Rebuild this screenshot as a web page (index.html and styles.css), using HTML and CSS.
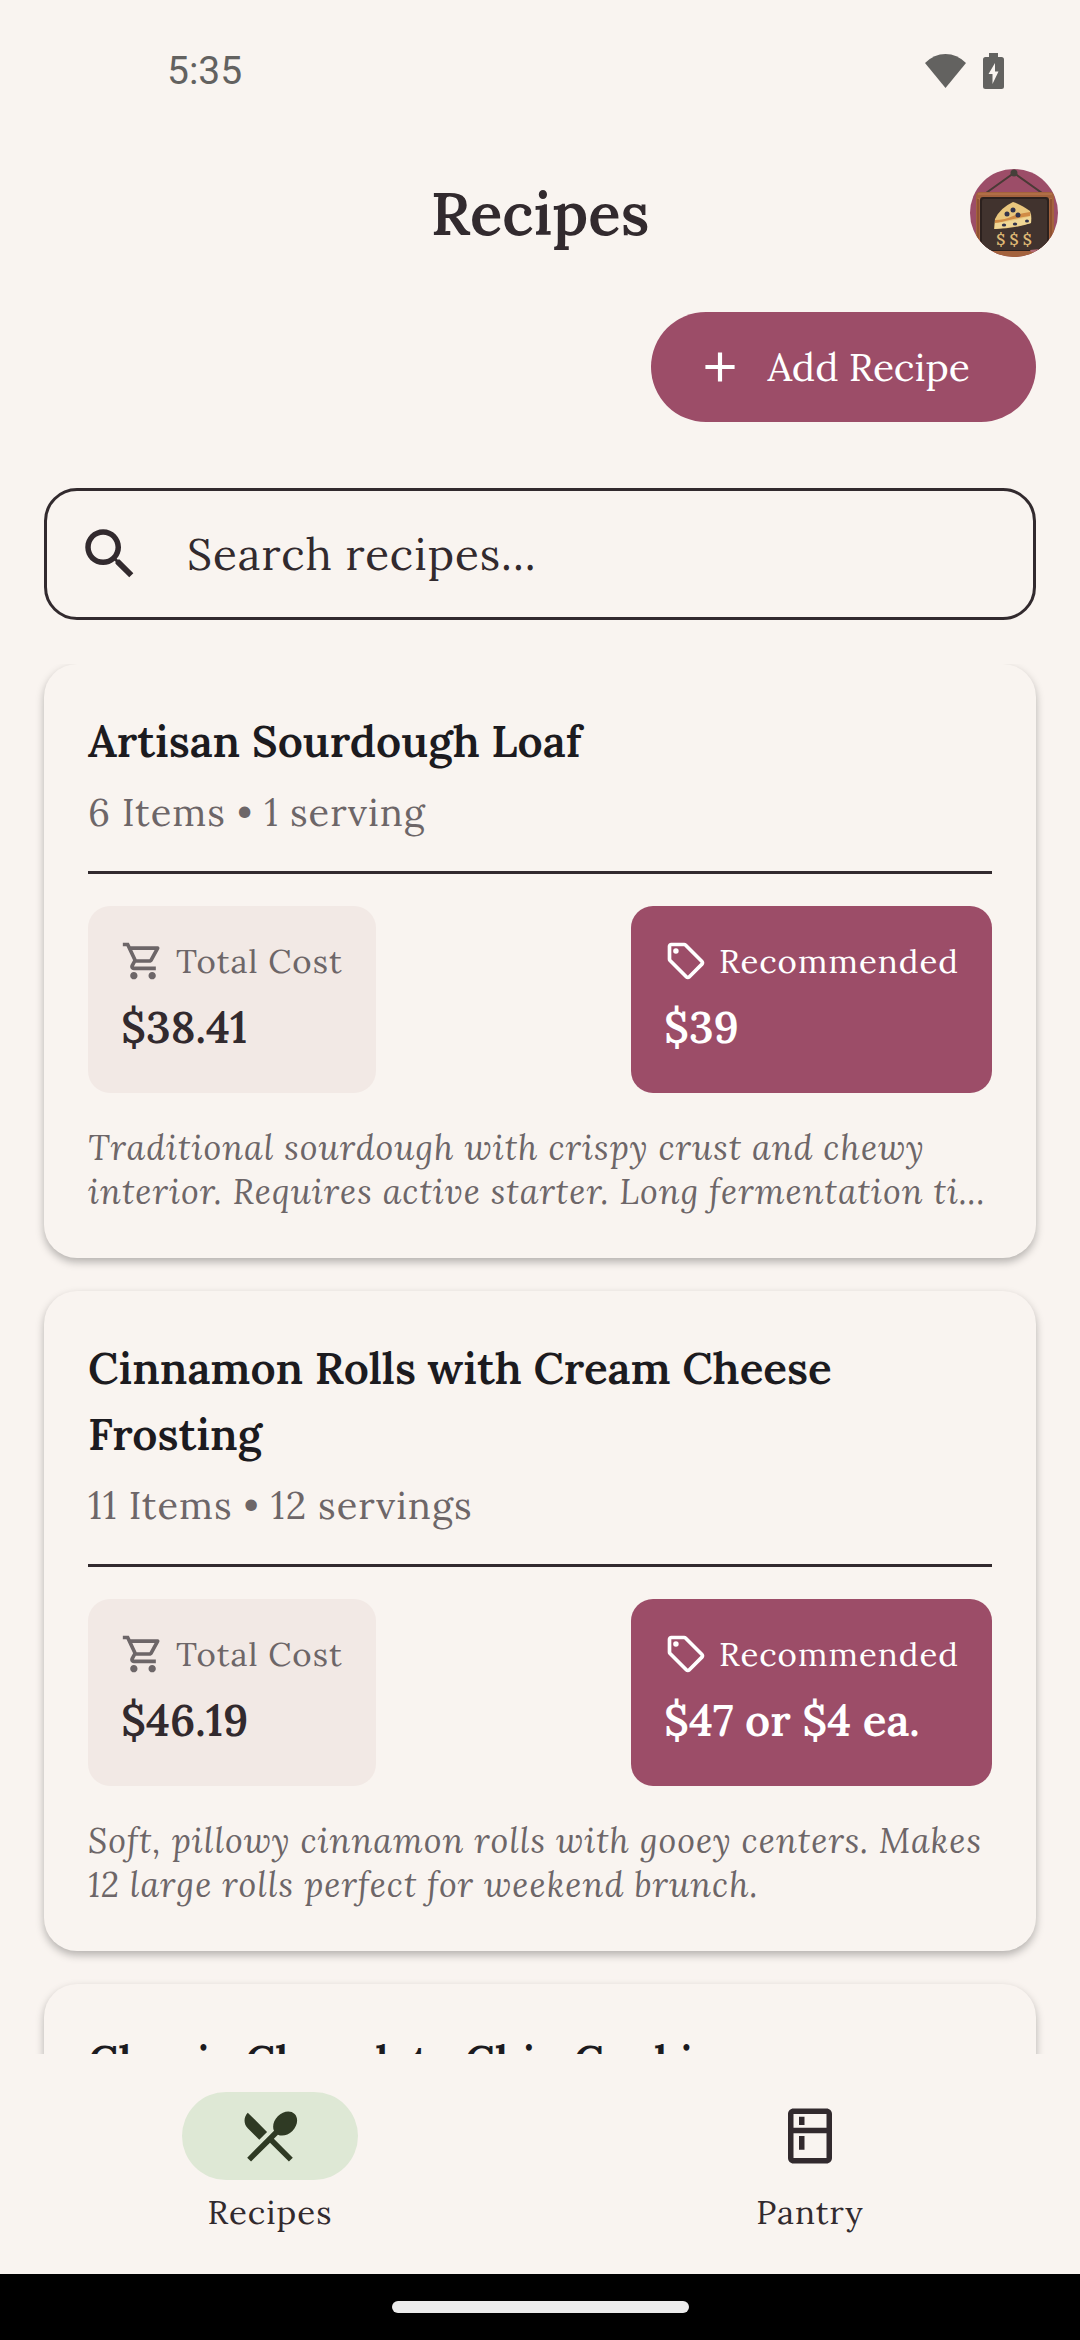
FILE: index.html
```html
<!DOCTYPE html>
<html lang="en">
<head>
<meta charset="utf-8">
<meta name="viewport" content="width=device-width, initial-scale=1">
<title>Recipes</title>
<link rel="stylesheet" href="styles.css">
</head>
<body>
<svg class="sprite" aria-hidden="true">
  <symbol id="cart" viewBox="0 0 24 24"><path d="M15.55 13c.75 0 1.41-.41 1.75-1.03l3.58-6.49c.37-.66-.11-1.48-.87-1.48H5.21l-.94-2H1v2h2l3.6 7.59-1.35 2.44C4.52 15.37 5.48 17 7 17h12v-2H7l1.1-2h7.45zM6.16 6h12.15l-2.76 5H8.53L6.16 6zM7 18c-1.1 0-1.99.9-1.99 2S5.9 22 7 22s2-.9 2-2-.9-2-2-2zm10 0c-1.1 0-1.99.9-1.99 2s.89 2 1.99 2 2-.9 2-2-.9-2-2-2z"/></symbol>
  <symbol id="tag" viewBox="0 0 24 24"><path d="M21.41 11.58l-9-9C12.05 2.22 11.55 2 11 2H4c-1.1 0-2 .9-2 2v7c0 .55.22 1.05.59 1.42l9 9c.36.36.86.58 1.41.58s1.05-.22 1.41-.59l7-7c.37-.36.59-.86.59-1.41s-.23-1.06-.59-1.42zM13 20.01L4 11V4h7v-.01l9 9-7 7.02z"/><circle cx="6.5" cy="6.5" r="1.5"/></symbol>
</svg>
<div class="app">
  <div class="status">
    <span class="clock">5:35</span>
    <div class="status-icons">
      <svg class="wifi" viewBox="0 0 41 36"><path d="M20.500 35L0 10Q9 1 20.500 1T41 10Z"/></svg>
      <svg class="battery" viewBox="0 0 21 36"><path fill-rule="evenodd" d="M6 0h9v4h3.500Q21 4 21 6.500v27Q21 36 18.500 36h-16Q0 36 0 33.500v-27Q0 4 2.500 4H6zM12 10L5.500 21H9.500v10L15.500 18.500H12z"/></svg>
    </div>
  </div>

  <header class="header">
    <h1 class="page-title">Recipes</h1>
    <button class="avatar" type="button" aria-label="Account">
      <svg viewBox="0 0 88 88">
        <rect width="88" height="88" fill="#9c4d68"/>
        <path d="M16 24L44 4 72 24" fill="none" stroke="#4a3a36" stroke-width="2"/>
        <circle cx="44" cy="4" r="3.500" fill="#45403a"/>
        <rect x="6" y="23" width="78" height="68" rx="4" fill="#a3623d"/>
        <path d="M8 25H82M8 30H82" stroke="#bd7b50" stroke-width="1"/>
        <path d="M8 30V88M81 30V88" stroke="#8a4c2e" stroke-width="1.500"/>
        <rect x="10" y="28" width="69" height="54" rx="3" fill="#2c211e"/>
        <rect x="12" y="30" width="65" height="51" rx="2" fill="#41332e"/>
        <path d="M24 60L25 50Q30 39 43 33 50 35 60 42Q62 47 61 54Q44 60 24 60Z" fill="#e9c67d"/>
        <path d="M25 51Q35 51 43 47 51 44 60 43V47Q45 49 25 55Z" fill="#d08b45"/>
        <path d="M25 54Q45 52 61 47V54Q45 58 25 60Z" fill="#f0d796"/>
        <g fill="#32334c"><circle cx="43" cy="41" r="2.500"/><circle cx="37" cy="45" r="2.500"/><circle cx="48" cy="46" r="2.500"/><ellipse cx="34" cy="56" rx="2.200" ry="1.600"/><ellipse cx="45" cy="55" rx="2.200" ry="1.600"/><ellipse cx="57" cy="52" rx="2" ry="1.600"/></g>
        <path d="M60 81L70 80 68 83H61Z" fill="#b36a76"/>
        <text x="44" y="76" text-anchor="middle" class="avatar-text">$ $ $</text>
      </svg>
    </button>
  </header>

  <div class="actions">
    <button class="add" type="button">
      <svg class="add-icon" viewBox="0 0 24 24"><path d="M19 13h-6v6h-2v-6H5v-2h6V5h2v6h6v2z"/></svg>
      Add Recipe
    </button>
  </div>

  <label class="search">
    <svg class="icon-large" viewBox="0 0 24 24"><path d="M15.500 14h-.79l-.28-.27C15.410 12.590 16 11.110 16 9.500 16 5.910 13.090 3 9.500 3S3 5.910 3 9.500 5.910 16 9.500 16c1.610 0 3.090-.59 4.230-1.570l.27.28v.79l5 4.990L20.490 19l-4.990-5zm-6 0C7.010 14 5 11.990 5 9.500S7.010 5 9.500 5 14 7.010 14 9.500 11.990 14 9.500 14z"/></svg>
    <input class="search-input" type="text" placeholder="Search recipes..." aria-label="Search recipes">
  </label>

  <main class="list">
    <article class="card">
      <h2 class="card-title">Artisan Sourdough Loaf</h2>
      <p class="meta">6 Items • 1 serving</p>
      <hr class="rule">
      <div class="prices">
        <div class="price">
          <span class="price-label"><svg class="icon-small"><use href="#cart"/></svg>Total Cost</span>
          <strong class="amount">$38.41</strong>
        </div>
        <div class="price price-accent">
          <span class="price-label"><svg class="icon-small"><use href="#tag"/></svg>Recommended</span>
          <strong class="amount">$39</strong>
        </div>
      </div>
      <p class="desc">Traditional sourdough with crispy crust and chewy interior. Requires active starter. Long fermentation ti...</p>
    </article>

    <article class="card">
      <h2 class="card-title">Cinnamon Rolls with Cream Cheese Frosting</h2>
      <p class="meta">11 Items • 12 servings</p>
      <hr class="rule">
      <div class="prices">
        <div class="price">
          <span class="price-label"><svg class="icon-small"><use href="#cart"/></svg>Total Cost</span>
          <strong class="amount">$46.19</strong>
        </div>
        <div class="price price-accent">
          <span class="price-label"><svg class="icon-small"><use href="#tag"/></svg>Recommended</span>
          <strong class="amount">$47 or $4 ea.</strong>
        </div>
      </div>
      <p class="desc">Soft, pillowy cinnamon rolls with gooey centers. Makes 12 large rolls perfect for weekend brunch.</p>
    </article>

    <article class="card">
      <h2 class="card-title">Classic Chocolate Chip Cookies</h2>
    </article>
  </main>

  <nav class="nav">
    <a class="nav-item" href="#recipes" aria-current="page">
      <span class="pill pill-active"><svg class="icon-large" viewBox="0 0 24 24"><path d="M8.100 13.340l2.830-2.830L3.910 3.500c-1.560 1.560-1.560 4.090 0 5.660l4.190 4.180zm6.780-1.810c1.530.71 3.680.21 5.270-1.380 1.910-1.910 2.280-4.650.81-6.120-1.460-1.460-4.200-1.100-6.120.81-1.590 1.590-2.090 3.740-1.380 5.270L3.700 19.870l1.410 1.410L12 14.410l6.880 6.880 1.410-1.410L13.410 13l1.470-1.470z"/></svg></span>
      Recipes
    </a>
    <a class="nav-item" href="#pantry">
      <span class="pill"><svg class="icon-large" viewBox="0 0 24 24"><path d="M18 2.010L6 2c-1.100 0-2 .89-2 2v16c0 1.100.9 2 2 2h12c1.100 0 2-.9 2-2V4c0-1.100-.9-1.990-2-1.990zM18 20H6v-9.020h12V20zm0-11H6V4h12v5zM8 5h2v3H8zM8 12h2v5H8z"/></svg></span>
      Pantry
    </a>
  </nav>
  <div class="system-bar"><span class="handle"></span></div>
</div>
</body>
</html>
```
FILE: styles.css
```css
:root {
  --surface: #f9f4f0;
  --ink: #322a2e;
  --ink-strong: #1c1b1f;
  --muted: #6d6668;
  --accent: #9c4d68;
}

* { box-sizing: border-box; }

body {
  margin: 0;
  background: var(--surface);
  color: var(--ink);
  font-family: "Lora", "Liberation Serif", serif;
  font-size: 33px;
  line-height: 44px;
}

svg { display: block; flex: none; fill: currentColor; }
h1, h2, p { margin: 0; }
button, input { font: inherit; color: inherit; }

.sprite { position: absolute; width: 0; height: 0; }

.app { display: flex; flex-direction: column; height: 100vh; }

.status {
  display: flex;
  flex: none;
  align-items: center;
  justify-content: space-between;
  height: 141px;
  padding: 0 76px 0 167px;
  color: #636260;
}
.clock { font-family: Roboto, sans-serif; font-size: 39px; font-weight: 400; }
.status-icons { display: flex; align-items: center; gap: 17px; }
.wifi { width: 41px; height: 36px; }
.battery { width: 21px; height: 36px; }

.header {
  display: grid;
  flex: none;
  grid-template-columns: 1fr auto 1fr;
  align-items: center;
  padding: 28px 22px 0;
}
.page-title { grid-column: 2; font-size: 60px; font-weight: 600; line-height: 88px; }
.avatar {
  justify-self: end;
  width: 88px;
  height: 88px;
  padding: 0;
  overflow: hidden;
  border: 0;
  border-radius: 50%;
}
.avatar-text { fill: #dfb975; font-size: 16px; font-weight: 600; }

.actions { display: flex; flex: none; justify-content: flex-end; padding: 55px 44px 0; }
.add {
  display: flex;
  align-items: center;
  gap: 22px;
  height: 110px;
  padding: 0 66px 0 44px;
  border: 0;
  border-radius: 55px;
  background: var(--accent);
  color: #fff;
  font-size: 39px;
}
.add-icon { width: 50px; height: 50px; }

.search {
  display: flex;
  flex: none;
  align-items: center;
  gap: 44px;
  height: 132px;
  margin: 66px 44px 44px;
  padding: 0 30px;
  border: 3px solid var(--ink);
  border-radius: 33px;
}
.search-input {
  flex: 1;
  min-width: 0;
  padding: 0;
  border: 0;
  outline: 0;
  background: none;
  font-size: 44px;
  letter-spacing: 1px;
  line-height: 66px;
}
.search-input::placeholder { color: var(--ink); opacity: 1; }

.icon-large { width: 66px; height: 66px; }
.icon-small { width: 44px; height: 44px; }

.list {
  display: flex;
  flex: 1;
  flex-direction: column;
  gap: 33px;
  min-height: 0;
  padding: 0 44px;
  overflow-y: auto;
  scrollbar-width: none;
}
.card {
  flex: none;
  padding: 44px;
  border-radius: 33px;
  background: var(--surface);
  box-shadow: 0 4px 9px rgba(0, 0, 0, .28);
}
.card-title { color: var(--ink-strong); font-size: 44px; font-weight: 600; line-height: 66px; }
.meta { margin-top: 11px; color: var(--muted); font-size: 38px; letter-spacing: 1px; line-height: 55px; }
.rule { height: 3px; margin: 31px 0 32px; border: 0; background: var(--ink); }

.prices { display: flex; justify-content: space-between; }
.price {
  display: flex;
  flex-direction: column;
  gap: 11px;
  padding: 33px;
  border-radius: 22px;
  background: #f2e9e5;
}
.price-label { display: flex; align-items: center; gap: 11px; color: var(--muted); letter-spacing: 1px; }
.amount { font-size: 44px; font-weight: 600; line-height: 66px; }
.price-accent { background: var(--accent); color: #fff; }
.price-accent .price-label { color: #fff; }

.desc { margin-top: 33px; color: var(--muted); font-size: 34px; font-style: italic; letter-spacing: 1px; }

.nav { display: flex; flex: none; padding: 38px 0 40px; }
.nav-item {
  display: flex;
  flex: 1;
  flex-direction: column;
  align-items: center;
  gap: 10px;
  color: inherit;
  letter-spacing: 1px;
  text-decoration: none;
}
.pill {
  display: flex;
  align-items: center;
  justify-content: center;
  width: 176px;
  height: 88px;
  border-radius: 44px;
}
.pill-active { background: #dee8d5; color: #2f3a24; }

.system-bar {
  display: flex;
  flex: none;
  align-items: center;
  justify-content: center;
  height: 66px;
  background: #000;
}
.handle { width: 297px; height: 12px; border-radius: 6px; background: #ececec; }
```
